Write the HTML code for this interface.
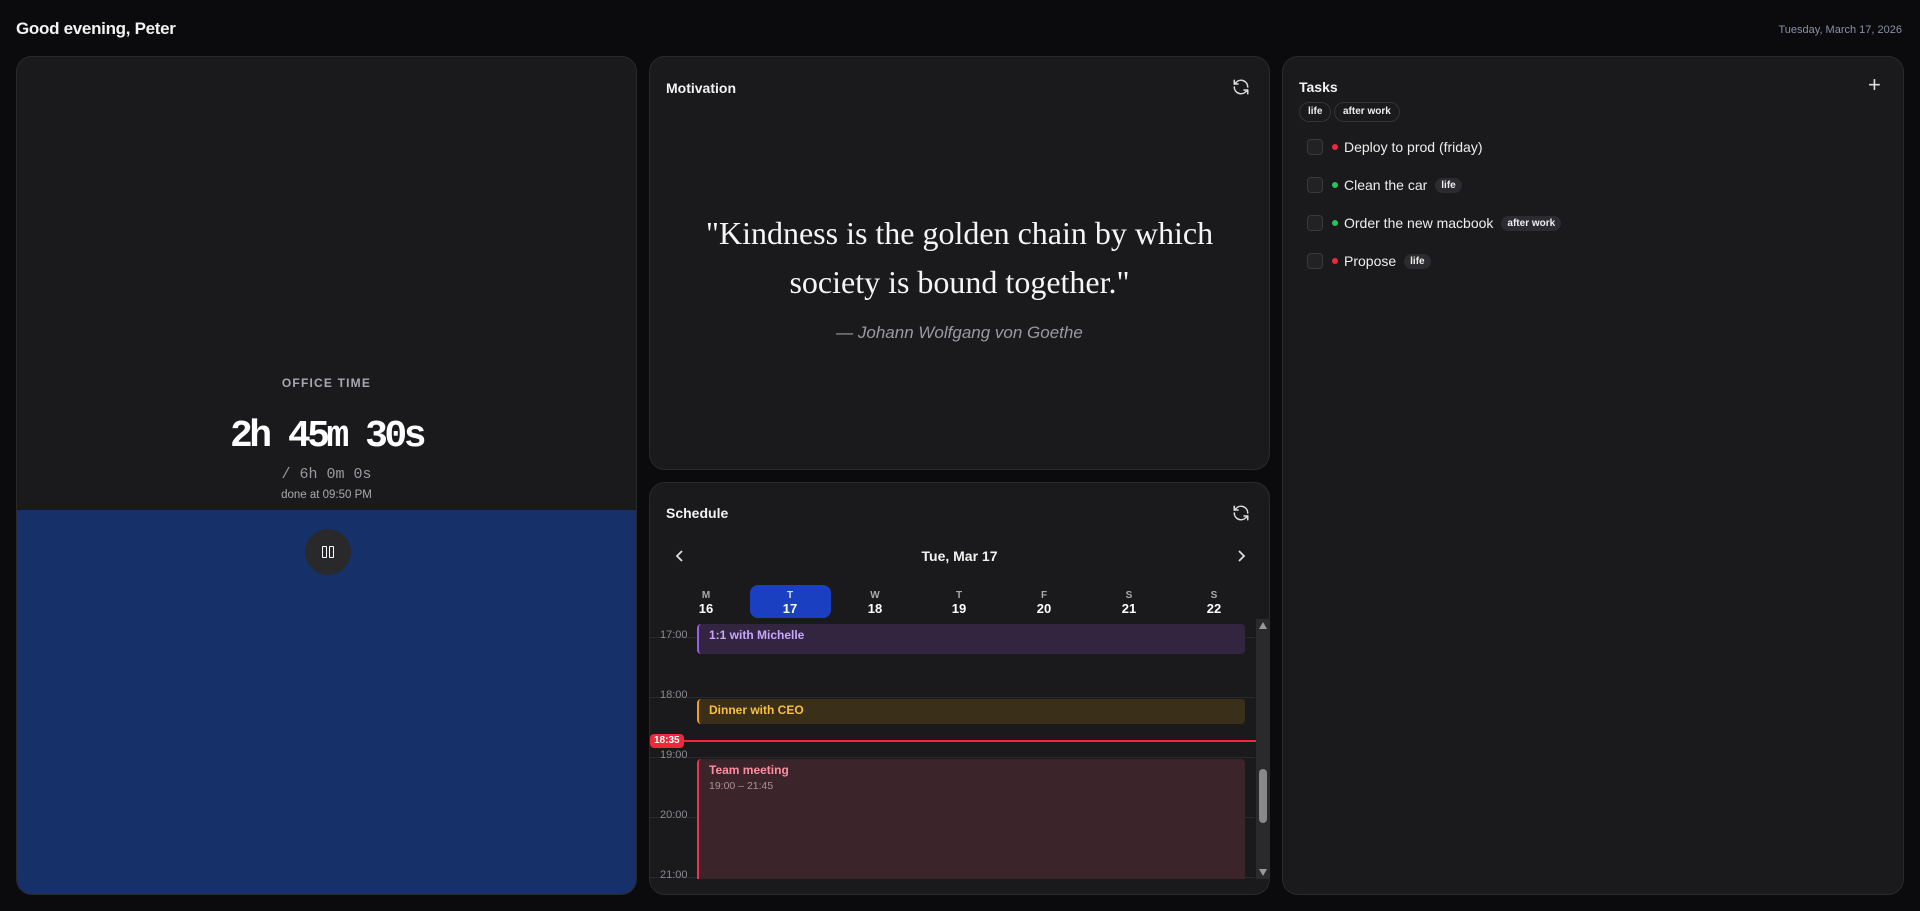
<!DOCTYPE html>
<html><head><meta charset="utf-8"><style>
*{box-sizing:border-box;margin:0;padding:0}
body{width:1920px;height:911px;background:#0b0b0d;font-family:"Liberation Sans",sans-serif;color:#f2f2f2;position:relative;overflow:hidden}
.a{position:absolute}
.card{position:absolute;background:#1a1a1c;border:1px solid #2a2a2e;border-radius:16px;overflow:hidden}
.t{font-size:14px;font-weight:bold;color:#f2f2f2}
.mono{font-family:"Liberation Mono",monospace}
.hl{position:absolute;left:0;right:14px;height:1px;background:#2a2a2e}
.tl{position:absolute;left:10px;font-size:11px;color:#8a8a90}
.day{position:absolute;width:80px;text-align:center;font-weight:bold}
.day b{display:block;font-size:10px;color:#aaa}
.day span{display:block;font-size:13px;color:#fff}
.ev{position:absolute;left:47px;width:548px;border-radius:4px;font-size:12px;font-weight:bold;padding:4px 10px}
.row{position:absolute;left:24px;height:20px;display:flex;align-items:center;font-size:14px;color:#eee}
.cb{width:16px;height:16px;border:1px solid #3a3a3e;border-radius:4px;background:#222225;margin-right:9px}
.dot{width:6px;height:6px;border-radius:50%;margin-right:6px}
.chip{font-size:10px;font-weight:bold;background:#2c2c30;border-radius:8px;padding:2px 6px;margin-left:8px;color:#eee}
.ochip{position:absolute;top:45px;height:20px;border:1px solid #333338;border-radius:10px;font-size:10px;font-weight:bold;padding:3px 8px;color:#eee}
</style></head><body>
<div class="a" style="left:16px;top:19px;font-size:17px;font-weight:bold;letter-spacing:-0.3px">Good evening, Peter</div>
<div class="a" style="right:18px;top:24px;font-size:11px;color:#8a90a8">Tuesday, March 17, 2026</div>

<div class="card" style="left:16px;top:56px;width:621px;height:839px">
  <div class="a" style="left:0;right:0;top:453px;bottom:0;background:#16306a"></div>
  <div class="a" style="left:0;right:0;top:319px;text-align:center;font-size:12px;letter-spacing:1.2px;color:#a8a8b0;font-weight:bold">OFFICE TIME</div>
  <div class="a mono" style="left:0;right:0;top:358px;text-align:center;font-size:38px;font-weight:bold;letter-spacing:-3.5px;color:#fff">2h 45m 30s</div>
  <div class="a mono" style="left:0;right:0;top:409px;text-align:center;font-size:15px;color:#9a9aa0">/ 6h 0m 0s</div>
  <div class="a" style="left:0;right:0;top:432px;text-align:center;font-size:11.5px;color:#aaa">done at 09:50 PM</div>
  <div class="a" style="left:288px;top:472px;width:46px;height:46px;border-radius:50%;background:#29292c">
    <div class="a" style="left:17px;top:17px;width:5px;height:12px;border:1.5px solid #fff;border-radius:1px"></div>
    <div class="a" style="left:24px;top:17px;width:5px;height:12px;border:1.5px solid #fff;border-radius:1px"></div>
  </div>
</div>

<div class="card" style="left:649px;top:56px;width:621px;height:414px">
  <div class="a t" style="left:16px;top:23px">Motivation</div>
  <svg class="a" style="left:582px;top:21px" width="18" height="18" viewBox="0 0 24 24" fill="none" stroke="#ddd" stroke-width="2" stroke-linecap="round" stroke-linejoin="round"><path d="M21 12a9 9 0 0 0-15.5-6.2L3 8"/><path d="M3 3v5h5"/><path d="M3 12a9 9 0 0 0 15.5 6.2L21 16"/><path d="M21 21v-5h-5"/></svg>
  <div class="a" style="left:20px;right:20px;top:152px;text-align:center;font-family:'Liberation Serif',serif;font-size:32px;line-height:49px;color:#f5f5f5">"Kindness is the golden chain by which<br>society is bound together."</div>
  <div class="a" style="left:0;right:0;top:266px;text-align:center;font-size:17px;font-style:italic;color:#9a9aa0">— Johann Wolfgang von Goethe</div>
</div>

<div class="card" style="left:649px;top:482px;width:621px;height:413px">
  <div class="a t" style="left:16px;top:22px">Schedule</div>
  <svg class="a" style="left:582px;top:21px" width="18" height="18" viewBox="0 0 24 24" fill="none" stroke="#ddd" stroke-width="2" stroke-linecap="round" stroke-linejoin="round"><path d="M21 12a9 9 0 0 0-15.5-6.2L3 8"/><path d="M3 3v5h5"/><path d="M3 12a9 9 0 0 0 15.5 6.2L21 16"/><path d="M21 21v-5h-5"/></svg>
  <svg class="a" style="left:24px;top:66px" width="12" height="14" viewBox="0 0 12 14" fill="none" stroke="#ddd" stroke-width="1.8"><path d="M8 2L3 7l5 5"/></svg>
  <svg class="a" style="left:585px;top:66px" width="12" height="14" viewBox="0 0 12 14" fill="none" stroke="#ddd" stroke-width="1.8"><path d="M4 2l5 5-5 5"/></svg>
  <div class="a" style="left:0;right:0;top:65px;text-align:center;font-size:14px;font-weight:bold">Tue, Mar 17</div>
  <div class="a" style="left:100px;top:102px;width:81px;height:33px;border-radius:8px;background:#1a3fc0"></div>
  <div class="day" style="left:16px;top:107px"><b>M</b><span>16</span></div>
  <div class="day" style="left:100px;top:107px"><b style="color:#dde">T</b><span>17</span></div>
  <div class="day" style="left:185px;top:107px"><b>W</b><span>18</span></div>
  <div class="day" style="left:269px;top:107px"><b>T</b><span>19</span></div>
  <div class="day" style="left:354px;top:107px"><b>F</b><span>20</span></div>
  <div class="day" style="left:439px;top:107px"><b>S</b><span>21</span></div>
  <div class="day" style="left:524px;top:107px"><b>S</b><span>22</span></div>
  <div class="a" style="left:0;right:0;top:136px;bottom:15px;overflow:hidden">
    <div class="hl" style="top:18px"></div><div class="hl" style="top:78px"></div><div class="hl" style="top:138px"></div><div class="hl" style="top:198px"></div><div class="hl" style="top:258px"></div>
    <div class="tl" style="top:10px">17:00</div><div class="tl" style="top:70px">18:00</div><div class="tl" style="top:130px">19:00</div><div class="tl" style="top:190px">20:00</div><div class="tl" style="top:250px">21:00</div>
    <div class="ev" style="top:5px;height:30px;background:#33253f;border-left:2px solid #9b5cf0;color:#c7a6ff">1:1 with Michelle</div>
    <div class="ev" style="top:80px;height:25px;background:#3a2f18;border-left:2px solid #f0a020;color:#f7c040">Dinner with CEO</div>
    <div class="ev" style="top:140px;height:130px;background:#3b242a;border-left:2px solid #f03050;color:#ff8fa0">Team meeting<div style="font-size:10.5px;font-weight:normal;color:#b09098;margin-top:3px">19:00 – 21:45</div></div>
    <div class="a" style="left:0;width:606px;top:121px;height:2px;background:#f0283a"></div>
    <div class="a" style="left:0;top:115px;height:14px;padding:0 4px;border-radius:4px;background:#f0283a;font-size:10px;font-weight:bold;color:#fff;line-height:14px">18:35</div>
    <div class="a" style="left:606px;top:0;width:15px;bottom:0;background:#2a2a2d"></div>
    <div class="a" style="left:609px;top:3px;width:0;height:0;border-left:4px solid transparent;border-right:4px solid transparent;border-bottom:7px solid #999"></div>
    <div class="a" style="left:609px;top:150px;width:8px;height:54px;border-radius:4px;background:#888"></div>
    <div class="a" style="left:609px;bottom:3px;width:0;height:0;border-left:4px solid transparent;border-right:4px solid transparent;border-top:7px solid #999"></div>
  </div>
</div>

<div class="card" style="left:1282px;top:56px;width:622px;height:839px">
  <div class="a t" style="left:16px;top:22px">Tasks</div>
  <div class="a" style="left:585px;top:15px;font-size:22px;color:#ddd">+</div>
  <div class="ochip" style="left:16px">life</div>
  <div class="ochip" style="left:51px">after work</div>
  <div class="row" style="top:80px"><div class="cb"></div><div class="dot" style="background:#f0283a"></div>Deploy to prod (friday)</div>
  <div class="row" style="top:118px"><div class="cb"></div><div class="dot" style="background:#22c55e"></div>Clean the car<span class="chip">life</span></div>
  <div class="row" style="top:156px"><div class="cb"></div><div class="dot" style="background:#22c55e"></div>Order the new macbook<span class="chip">after work</span></div>
  <div class="row" style="top:194px"><div class="cb"></div><div class="dot" style="background:#f0283a"></div>Propose<span class="chip">life</span></div>
</div>
</body></html>
